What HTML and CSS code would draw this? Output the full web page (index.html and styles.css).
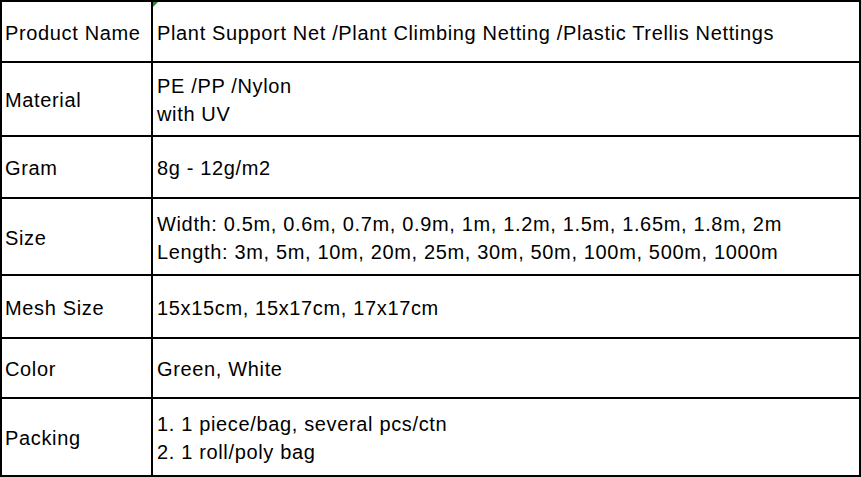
FILE: index.html
```html
<!DOCTYPE html>
<html>
<head>
<meta charset="utf-8">
<link rel="stylesheet" href="styles.css">
</head>
<body>
<table class="spec">
  <tr class="r1"><td class="k">Product Name</td><td class="v flag">Plant Support Net /Plant Climbing Netting /Plastic Trellis Nettings</td></tr>
  <tr class="r2"><td class="k">Material</td><td class="v">PE /PP /Nylon<br>with UV</td></tr>
  <tr class="r3"><td class="k">Gram</td><td class="v">8g - 12g/m2</td></tr>
  <tr class="r4"><td class="k">Size</td><td class="v">Width: 0.5m, 0.6m, 0.7m, 0.9m, 1m, 1.2m, 1.5m, 1.65m, 1.8m, 2m<br>Length: 3m, 5m, 10m, 20m, 25m, 30m, 50m, 100m, 500m, 1000m</td></tr>
  <tr class="r5"><td class="k">Mesh Size</td><td class="v">15x15cm, 15x17cm, 17x17cm</td></tr>
  <tr class="r6"><td class="k">Color</td><td class="v">Green, White</td></tr>
  <tr class="r7"><td class="k">Packing</td><td class="v">1. 1 piece/bag, several pcs/ctn<br>2. 1 roll/poly bag</td></tr>
</table>
</body>
</html>
```
FILE: styles.css
```css
html, body {
  margin: 0;
  padding: 0;
  background: #fff;
}
.spec {
  border-collapse: separate;
  border-spacing: 0;
  border-top: 2px solid #000;
  border-left: 2px solid #000;
  width: 861px;
  font-family: "Liberation Sans", Arial, sans-serif;
  font-size: 20px;
  letter-spacing: 0.65px;
  line-height: 28px;
  color: #000;
}
.spec td {
  border-right: 2px solid #000;
  border-bottom: 2px solid #000;
  padding: 2px 0 0 3px;
  vertical-align: middle;
  white-space: nowrap;
}
.spec td.k {
  width: 151px;
  box-sizing: border-box;
}
.spec td.v {
  padding-left: 4px;
}
.flag {
  position: relative;
}
.flag::before {
  content: "";
  position: absolute;
  left: 0;
  top: 0;
  width: 0;
  height: 0;
  border-top: 5px solid #1f8f1f;
  border-right: 5px solid transparent;
}
.r1 { height: 61px; }
.r2 { height: 74px; }
.r3 { height: 62px; }
.r4 { height: 77px; }
.r5 { height: 63px; }
.r6 { height: 60px; }
.r7 { height: 78px; }
```
